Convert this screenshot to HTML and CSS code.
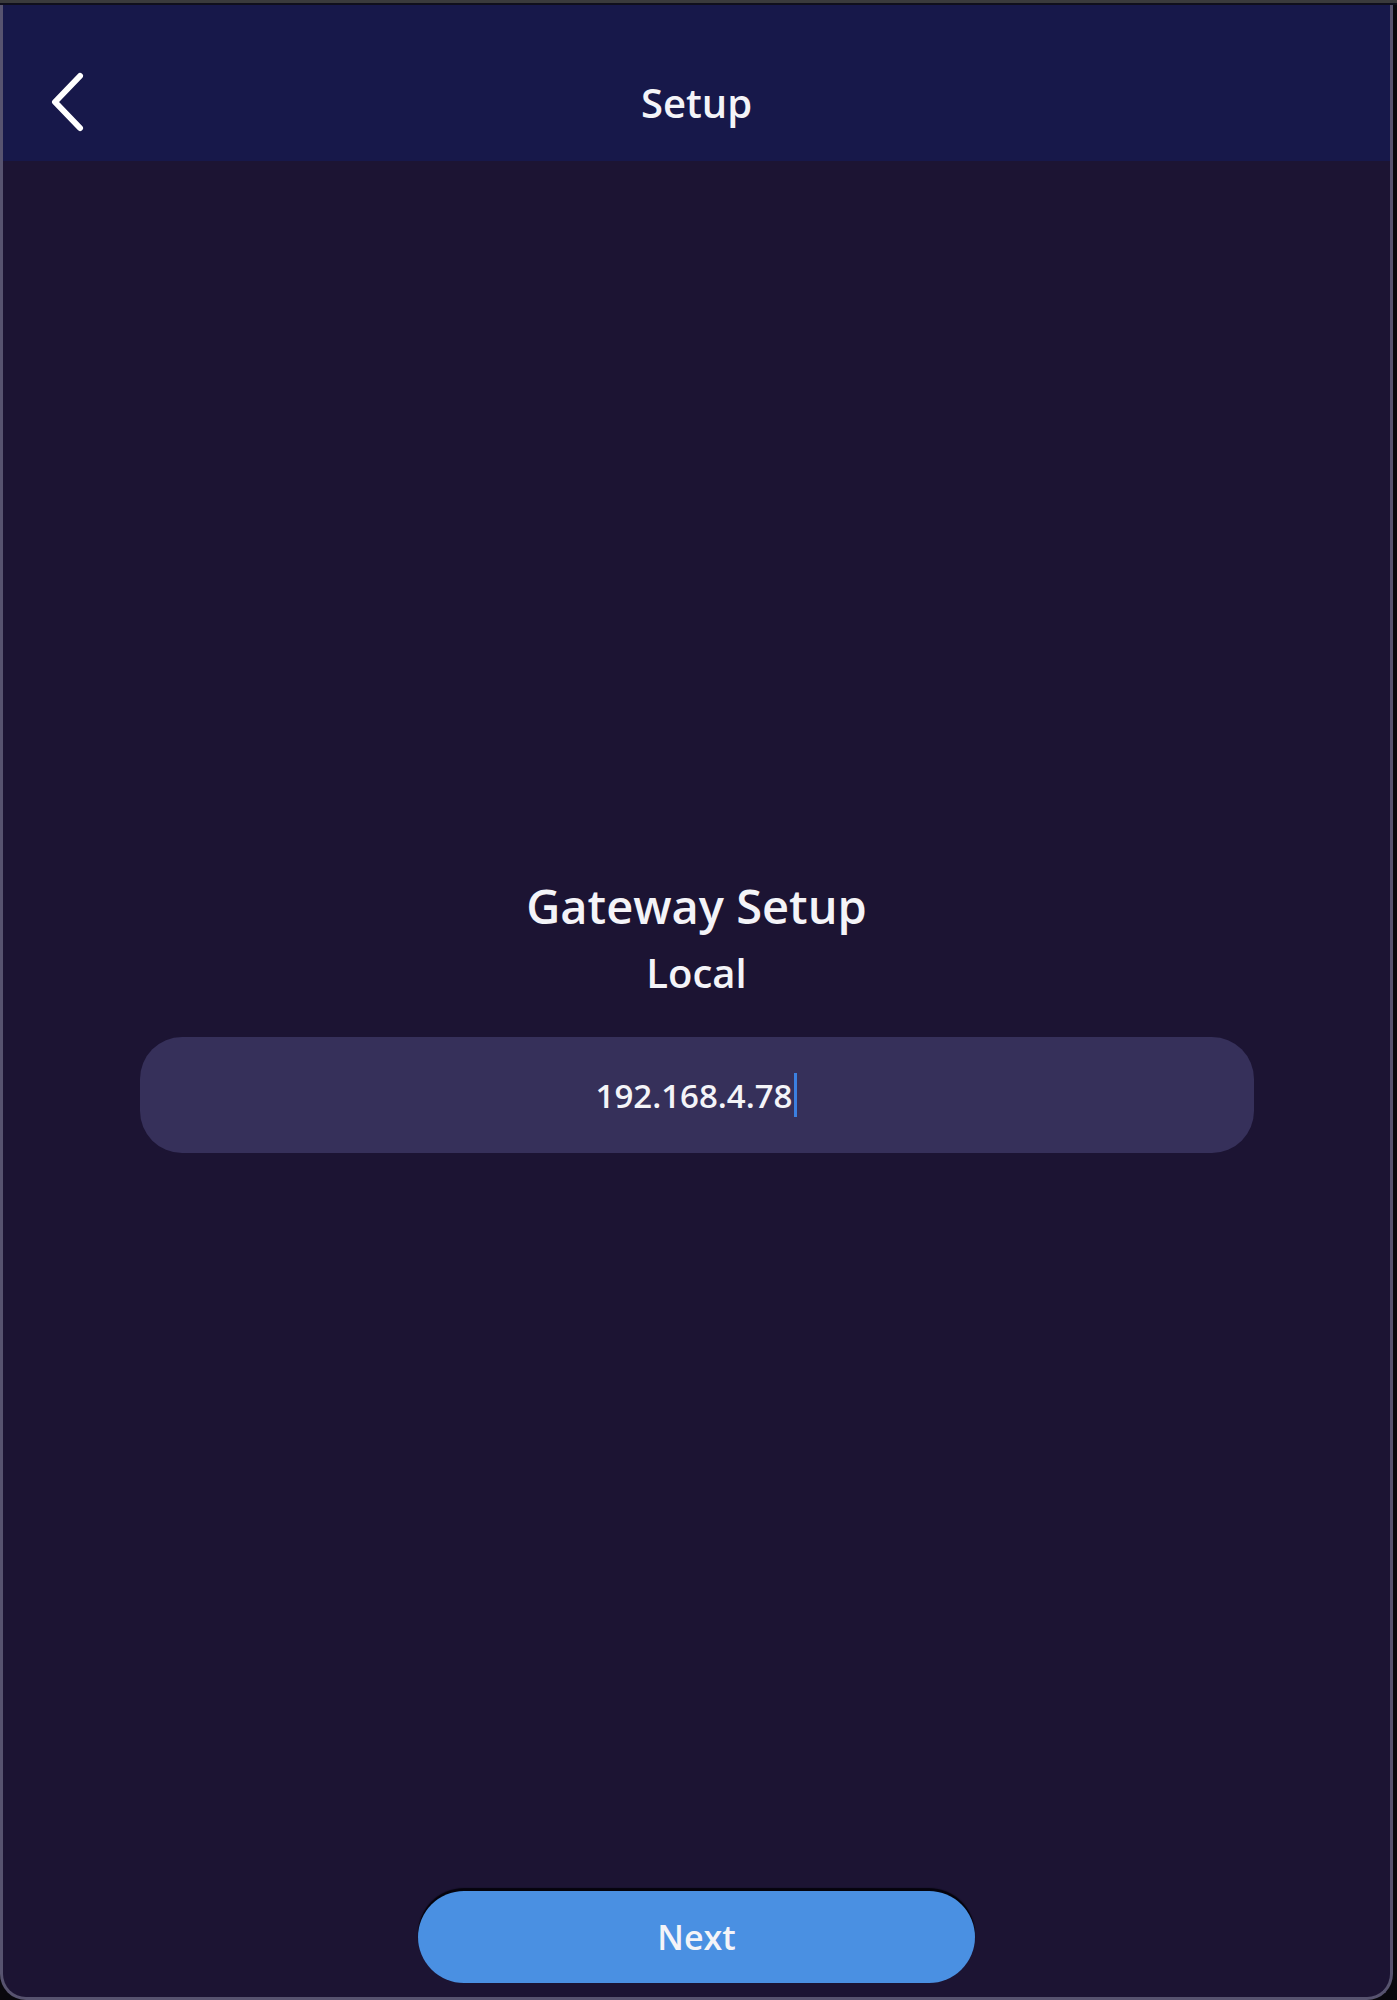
FILE: index.html
```html
<!DOCTYPE html>
<html>
<head>
<link rel="stylesheet" href="styles.css">
</head>
<body>
<div class="chrome"></div>
<div class="window">
    <div class="header">
        <div class="back">
            <svg width="40" height="64" viewBox="0 0 40 64"><polyline points="30,6 5,32 30,58" fill="none" stroke="#fff" stroke-width="6" stroke-linecap="round" stroke-linejoin="round"/></svg>
        </div>
        <div class="title">Setup</div>
        <div></div>
    </div>
    <div class="main">
        <div class="heading">Gateway Setup</div>
        <div class="subheading">Local</div>
        <div class="field"><span class="value">192.168.4.78</span><span class="caret"></span></div>
        <div class="button">Next</div>
    </div>
</div>
</body>
</html>
```

FILE: styles.css
```css
body{
    margin:0;
    background:#09080d;
    font-family:"Open Sans", "Noto Sans", sans-serif;
    color:#f4f4f8;
}
.chrome{
    height:3px;
    background:#3a3a3c;
    border-bottom:2px solid #100f1c;
}
.window{
    width:1393px;
    height:1995px;
    box-sizing:border-box;
    border:3px solid #57536f;
    border-top:none;
    border-radius:0 0 26px 26px;
    background:#1c1433;
    display:flex;
    flex-direction:column;
    overflow:hidden;
}
.header{
    height:156px;
    box-sizing:border-box;
    padding-top:38px;
    background:#17184a;
    display:grid;
    grid-template-columns:1fr auto 1fr;
    align-items:center;
}
.back{
    padding-left:47px;
    padding-top:4px;
}
.title{
    font-size:40px;
    font-weight:600;
}
.main{
    flex:1;
    display:flex;
    flex-direction:column;
    align-items:center;
    padding-top:714px;
    padding-bottom:14px;
}
.heading{
    font-size:47px;
    font-weight:600;
    line-height:62px;
}
.subheading{
    font-size:40px;
    font-weight:600;
    line-height:56px;
    margin-top:8px;
}
.field{
    width:1114px;
    height:116px;
    margin-top:36px;
    border-radius:42px;
    background:#36305a;
    display:flex;
    align-items:center;
    justify-content:center;
    font-size:33px;
    font-weight:600;
}
.caret{
    width:3px;
    height:44px;
    background:#3b7fe0;
    margin-left:2px;
}
.button{
    margin-top:auto;
    width:557px;
    height:92px;
    border-radius:46px;
    background:#4a90e2;
    box-shadow:0 -3px 1px #05030c;
    display:flex;
    align-items:center;
    justify-content:center;
    font-size:34px;
    font-weight:600;
}
```
